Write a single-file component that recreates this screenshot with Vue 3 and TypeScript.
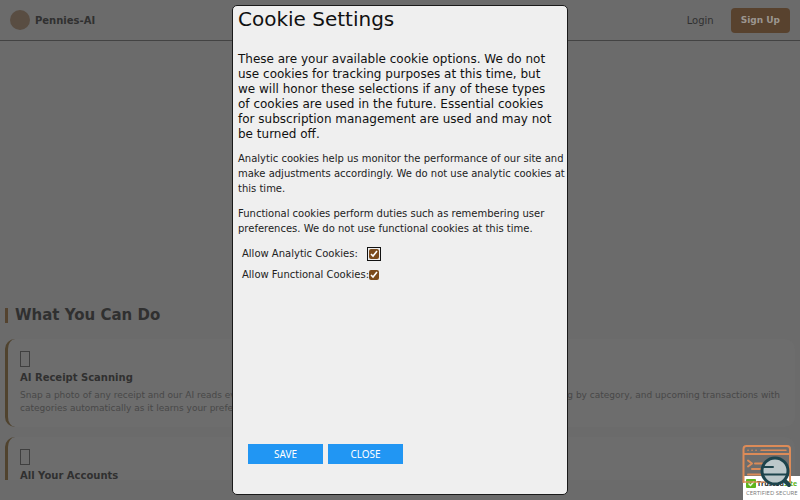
<script setup lang="ts">
import { ref } from 'vue'

const analytic = ref(true)
const functional = ref(true)
</script>

<template>
  <div class="page">
    <header class="bar">
      <a class="brand" href="#"><span class="coin"></span>Pennies-AI</a>
      <nav class="nav">
        <a class="login" href="#">Login</a>
        <a class="signup" href="#">Sign Up</a>
      </nav>
    </header>
    <main class="content">
      <h2 class="heading">What You Can Do</h2>
      <section class="card">
        <div class="glyph"></div>
        <h3>AI Receipt Scanning</h3>
        <p class="line"><span>Snap a photo of any receipt and our AI reads every</span><span>spending by category, and upcoming transactions with</span></p>
        <p class="line"><span>categories automatically as it learns your preferences</span></p>
      </section>
      <section class="card">
        <div class="glyph"></div>
        <h3>All Your Accounts</h3>
      </section>
    </main>
  </div>

  <aside class="seal" aria-label="TrustedSite certified secure">
    <div class="mark">
      <svg class="check" viewBox="0 0 10 9"><rect width="10" height="9" rx="1" fill="#5fb51d" /><path d="M2.5 4.5l2 2 3.5-4" fill="none" stroke="#e9f7dd" stroke-width="1.5" /></svg>
      <span>Trusted<em>Site</em></span>
    </div>
    <div class="certified">CERTIFIED SECURE</div>
  </aside>
  <svg class="inspect" viewBox="0 0 50 44" aria-hidden="true">
    <g fill="none" stroke="#dc8b58" stroke-width="2" stroke-linecap="round" stroke-linejoin="round">
      <path d="M1.5 38V5q0-3 3-3H45q3 0 3 3V38M2 10H47" />
      <path d="M1.5 38H26" stroke-opacity="0.7" />
      <path d="M6 6.2h.1M10 6.2h.1M14 6.2h.1M19 6.2H44" stroke-width="1.5" />
      <path d="M6 16.5l4 3-4 3M13 19.5h7M10 25h9M6 30.5h14" />
    </g>
    <path d="M43 37l4 4" stroke="#1d444c" stroke-width="4" stroke-linecap="round" />
    <circle cx="33" cy="27" r="13" fill="#bcc8ca" stroke="#1d444c" stroke-width="3" />
    <path d="M22 23h9M21 30.5h24" stroke="#1d444c" stroke-width="2" stroke-linecap="round" />
  </svg>

  <div class="layer">
    <form class="dialog" role="dialog" aria-labelledby="title" @submit.prevent>
      <h1 id="title">Cookie Settings</h1>
      <p class="lead">
        These are your available cookie options. We do not<br />
        use cookies for tracking purposes at this time, but<br />
        we will honor these selections if any of these types<br />
        of cookies are used in the future. Essential cookies<br />
        for subscription management are used and may not<br />
        be turned off.
      </p>
      <p class="text">
        Analytic cookies help us monitor the performance of our site and<br />
        make adjustments accordingly. We do not use analytic cookies at<br />
        this time.
      </p>
      <p class="text">
        Functional cookies perform duties such as remembering user<br />
        preferences. We do not use functional cookies at this time.
      </p>
      <div class="options">
        <label for="analytic">Allow Analytic Cookies:</label>
        <input id="analytic" v-model="analytic" class="focused" type="checkbox" />
        <label for="functional">Allow Functional Cookies:</label>
        <input id="functional" v-model="functional" type="checkbox" />
      </div>
      <div class="actions">
        <button type="submit">SAVE</button>
        <button type="button">CLOSE</button>
      </div>
    </form>
  </div>
</template>

<style>
body {
  background: #6b6b6b;
}
</style>

<style scoped>
* {
  box-sizing: border-box;
}
.page {
  height: calc(100vh - 20px);
  overflow: hidden;
  font-family: "DejaVu Sans", sans-serif;
  color: #303030;
}
a {
  color: inherit;
  text-decoration: none;
}
h1, h2, h3, p {
  margin: 0;
}
.bar {
  display: flex;
  justify-content: space-between;
  align-items: center;
  height: 41px;
  padding: 0 10px;
  border-bottom: 1px solid #434343;
}
.brand {
  display: flex;
  align-items: center;
  gap: 5px;
  font-size: 10px;
  font-weight: bold;
}
.coin {
  width: 20px;
  height: 20px;
  border-radius: 50%;
  background: #594d42;
}
.nav {
  display: flex;
  align-items: center;
  gap: 17px;
  font-size: 10px;
}
.signup {
  height: 25px;
  padding: 0 10px;
  border-radius: 4px;
  background: #58422e;
  color: #9c9690;
  font-size: 9px;
  font-weight: bold;
  line-height: 25px;
}
.content {
  padding: 267px 5px 0;
}
.heading {
  margin-bottom: 16px;
  padding-left: 7px;
  border-left: 3px solid #54432f;
  font-size: 15px;
  line-height: 15px;
}
.card {
  height: 88px;
  margin-bottom: 10px;
  padding: 12px 15px 0 12px;
  border-left: 3px solid #50432e;
  border-radius: 10px;
  background: #6d6d6d;
}
.glyph {
  width: 10px;
  height: 16px;
  margin-bottom: 4px;
  border: 1px solid #3f3f3f;
}
.card h3 {
  margin-bottom: 4px;
  font-size: 10px;
  line-height: 14px;
}
.line {
  display: flex;
  justify-content: space-between;
  color: #484848;
  font-size: 9px;
  line-height: 13px;
}
.layer {
  position: fixed;
  inset: 0;
  display: flex;
  justify-content: center;
  padding: 5px;
}
.dialog {
  display: flex;
  flex-direction: column;
  width: 42%;
  min-width: 336px;
  padding: 0 3px 0 5px;
  border: 1px solid #1a1a1a;
  border-radius: 5px;
  background: #efefef;
  color: #222;
  font-family: "DejaVu Sans", sans-serif;
}
.dialog h1 {
  margin-bottom: 20px;
  color: #111;
  font-size: 20px;
  font-weight: normal;
  line-height: 26px;
}
.lead {
  margin-bottom: 9px;
  color: #111;
  font-size: 12px;
  line-height: 15px;
  white-space: nowrap;
}
.text {
  margin-bottom: 10px;
  font-size: 10px;
  line-height: 15px;
  white-space: nowrap;
}
.options {
  display: grid;
  grid-template-columns: 127px 14px;
  align-items: center;
  row-gap: 6px;
  padding-left: 4px;
  font-size: 10px;
  line-height: 15px;
}
.options label {
  white-space: nowrap;
}
input {
  width: 10px;
  height: 10px;
  margin: 0;
  accent-color: #7a4a1c;
}
.focused {
  border-radius: 2px;
  outline: 1px solid #111;
  outline-offset: 1px;
}
.actions {
  display: flex;
  gap: 5px;
  margin-top: auto;
  padding: 0 10px 30px;
}
button {
  width: 75px;
  height: 20px;
  padding: 0;
  border: 0;
  background: #2196f3;
  color: #fff;
  font-family: "Noto Sans", sans-serif;
  font-size: 10px;
}
.seal {
  position: fixed;
  right: 0;
  bottom: 0;
  width: 57px;
  height: 24px;
  padding: 3px;
  background: #fff;
  font-family: "Open Sans", sans-serif;
}
.mark {
  display: flex;
  gap: 1px;
  color: #222;
  font-size: 7px;
  font-weight: bold;
  line-height: 10px;
}
.check {
  flex: none;
  width: 10px;
  height: 9px;
}
.mark em {
  color: #5fb51d;
  font-style: normal;
}
.certified {
  color: #777;
  font-size: 6px;
  line-height: 9px;
  white-space: nowrap;
}
.inspect {
  position: fixed;
  right: 8px;
  bottom: 12px;
  width: 50px;
  height: 44px;
}
</style>
